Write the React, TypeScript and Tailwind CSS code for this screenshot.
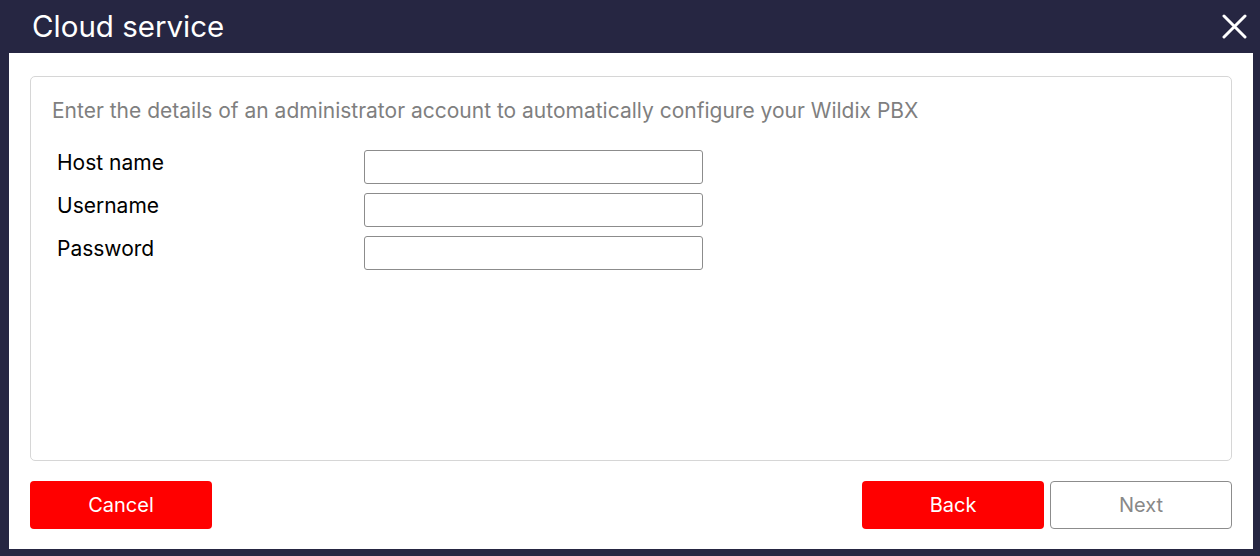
export default function App() {
  const fields = ['Host name', 'Username', 'Password'];

  return (
    <div className="flex h-[556px] w-[1260px] flex-col bg-[#262642] font-['Inter',sans-serif]">
      <div className="flex h-[53px] items-center justify-between pl-[32px] pr-[13px]">
        <h1 className="text-[29.5px] leading-none text-white">Cloud service</h1>
        <button className="text-white" aria-label="Close">
          <svg width="25" height="25" viewBox="0 0 25 25" fill="none" stroke="currentColor" strokeWidth="3" strokeLinecap="round">
            <path d="M2 2L23 23M23 2L2 23" />
          </svg>
        </button>
      </div>

      <div className="mb-[7px] ml-[9px] mr-[7px] flex flex-1 flex-col bg-white px-[21px] pt-[23px]">
        <div className="h-[385px] rounded-[5px] border border-[#d6d6d6] pl-[21px] pt-[22px]">
          <p className="text-[21px] leading-[24px] text-[#7f7f7f]">
            Enter the details of an administrator account to automatically configure your Wildix PBX
          </p>
          <div className="mt-[27px] flex flex-col gap-[9px] pl-[5px]">
            {fields.map((f) => (
              <div key={f} className="flex items-start">
                <label className="w-[307px] pt-[1px] text-[21px] leading-[24px] text-black">{f}</label>
                <input
                  type={f === 'Password' ? 'password' : 'text'}
                  className="h-[34px] w-[339px] rounded-[3px] border border-[#8c8c8c] bg-white px-2 outline-none"
                />
              </div>
            ))}
          </div>
        </div>

        <div className="mt-[20px] flex items-center justify-between">
          <button className="h-[48px] w-[182px] rounded-[4px] bg-[#ff0000] text-[20px] text-white">Cancel</button>
          <div className="flex gap-[6px]">
            <button className="h-[48px] w-[182px] rounded-[4px] bg-[#ff0000] text-[20px] text-white">Back</button>
            <button className="h-[48px] w-[182px] rounded-[4px] border border-[#8c8c8c] bg-white text-[20px] text-[#888888]">
              Next
            </button>
          </div>
        </div>
      </div>
    </div>
  );
}
